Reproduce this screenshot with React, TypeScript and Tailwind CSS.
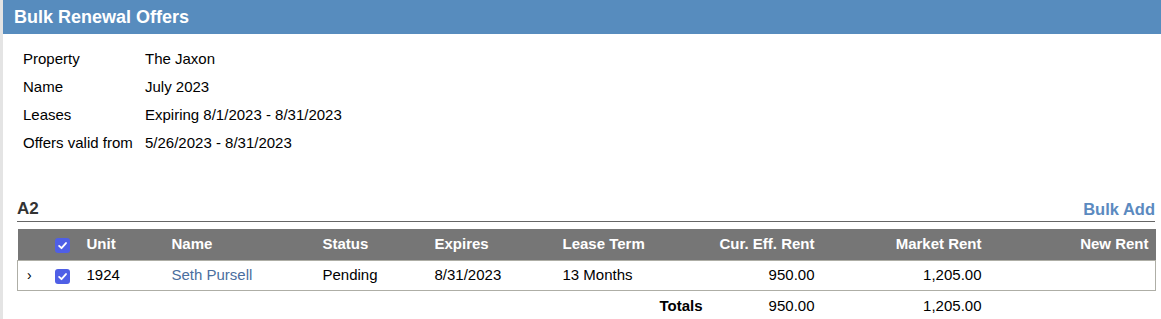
import React from "react";

function Check() {
  return (
    <span className="inline-flex h-[15px] w-[15px] items-center justify-center rounded-[3px] bg-[#4f5fe6] align-middle">
      <svg width="11" height="11" viewBox="0 0 12 12" fill="none">
        <path d="M2.3 6.4 L4.9 8.9 L9.8 3.3" stroke="white" strokeWidth="2" strokeLinecap="round" strokeLinejoin="round" />
      </svg>
    </span>
  );
}

const info = [
  ["Property", "The Jaxon"],
  ["Name", "July 2023"],
  ["Leases", "Expiring 8/1/2023 - 8/31/2023"],
  ["Offers valid from", "5/26/2023 - 8/31/2023"],
];

export default function App() {
  return (
    <div className="min-h-[319px] w-[1161px] border-l-[3px] border-[#e4e4e4] bg-white font-['Liberation_Sans',Arial,sans-serif] text-[15px] leading-[18px] text-black">
      <div className="flex h-[34px] items-center bg-[#578cbe] pl-[11px] text-[18px] font-bold text-white">
        Bulk Renewal Offers
      </div>

      <div className="px-[20px] pt-[11px]">
        {info.map(([label, value]) => (
          <div key={label} className="flex h-[28px] items-center">
            <div className="w-[122px]">{label}</div>
            <div>{value}</div>
          </div>
        ))}
      </div>

      <div className="mt-[42px] pl-[14px] pr-[6px]">
        <div className="flex items-end justify-between border-b border-[#666] pb-[2px] leading-[20px]">
          <span className="text-[17px] font-bold text-[#333]">A2</span>
          <span className="text-[16.5px] font-bold text-[#5b8ac0]">Bulk Add</span>
        </div>

        <table className="mt-[7px] w-[1138px] table-fixed border-collapse">
          <colgroup>
            <col className="w-[29px]" />
            <col className="w-[32px]" />
            <col className="w-[86px]" />
            <col className="w-[151px]" />
            <col className="w-[111px]" />
            <col className="w-[128px]" />
            <col className="w-[156px]" />
            <col className="w-[112px]" />
            <col className="w-[167px]" />
            <col className="w-[166px]" />
          </colgroup>
          <thead>
            <tr className="h-[31px] bg-[#767676] text-left font-bold text-white">
              <th />
              <th className="pl-[8px]"><Check /></th>
              <th className="px-[8px]">Unit</th>
              <th className="px-[7px]">Name</th>
              <th className="px-[7px]">Status</th>
              <th className="px-[8px]">Expires</th>
              <th className="px-[8px]">Lease Term</th>
              <th className="px-[8px] text-right">Cur. Eff. Rent</th>
              <th className="px-[8px] text-right">Market Rent</th>
              <th className="px-[7px] text-right">New Rent</th>
            </tr>
          </thead>
          <tbody>
            <tr className="h-[30px] border border-[#aeaea6]">
              <td className="pl-[9px] text-[14px]">›</td>
              <td className="pl-[8px]"><Check /></td>
              <td className="px-[8px]">1924</td>
              <td className="px-[7px] text-[#4a6e9e]">Seth Pursell</td>
              <td className="px-[7px]">Pending</td>
              <td className="px-[8px]">8/31/2023</td>
              <td className="px-[8px]">13 Months</td>
              <td className="px-[8px] text-right">950.00</td>
              <td className="px-[8px] text-right">1,205.00</td>
              <td />
            </tr>
            <tr className="h-[28px]">
              <td colSpan={7} className="px-[8px] pt-[4px] text-right font-bold">Totals</td>
              <td className="px-[8px] pt-[4px] text-right">950.00</td>
              <td className="px-[8px] pt-[4px] text-right">1,205.00</td>
              <td />
            </tr>
          </tbody>
        </table>
      </div>
    </div>
  );
}
